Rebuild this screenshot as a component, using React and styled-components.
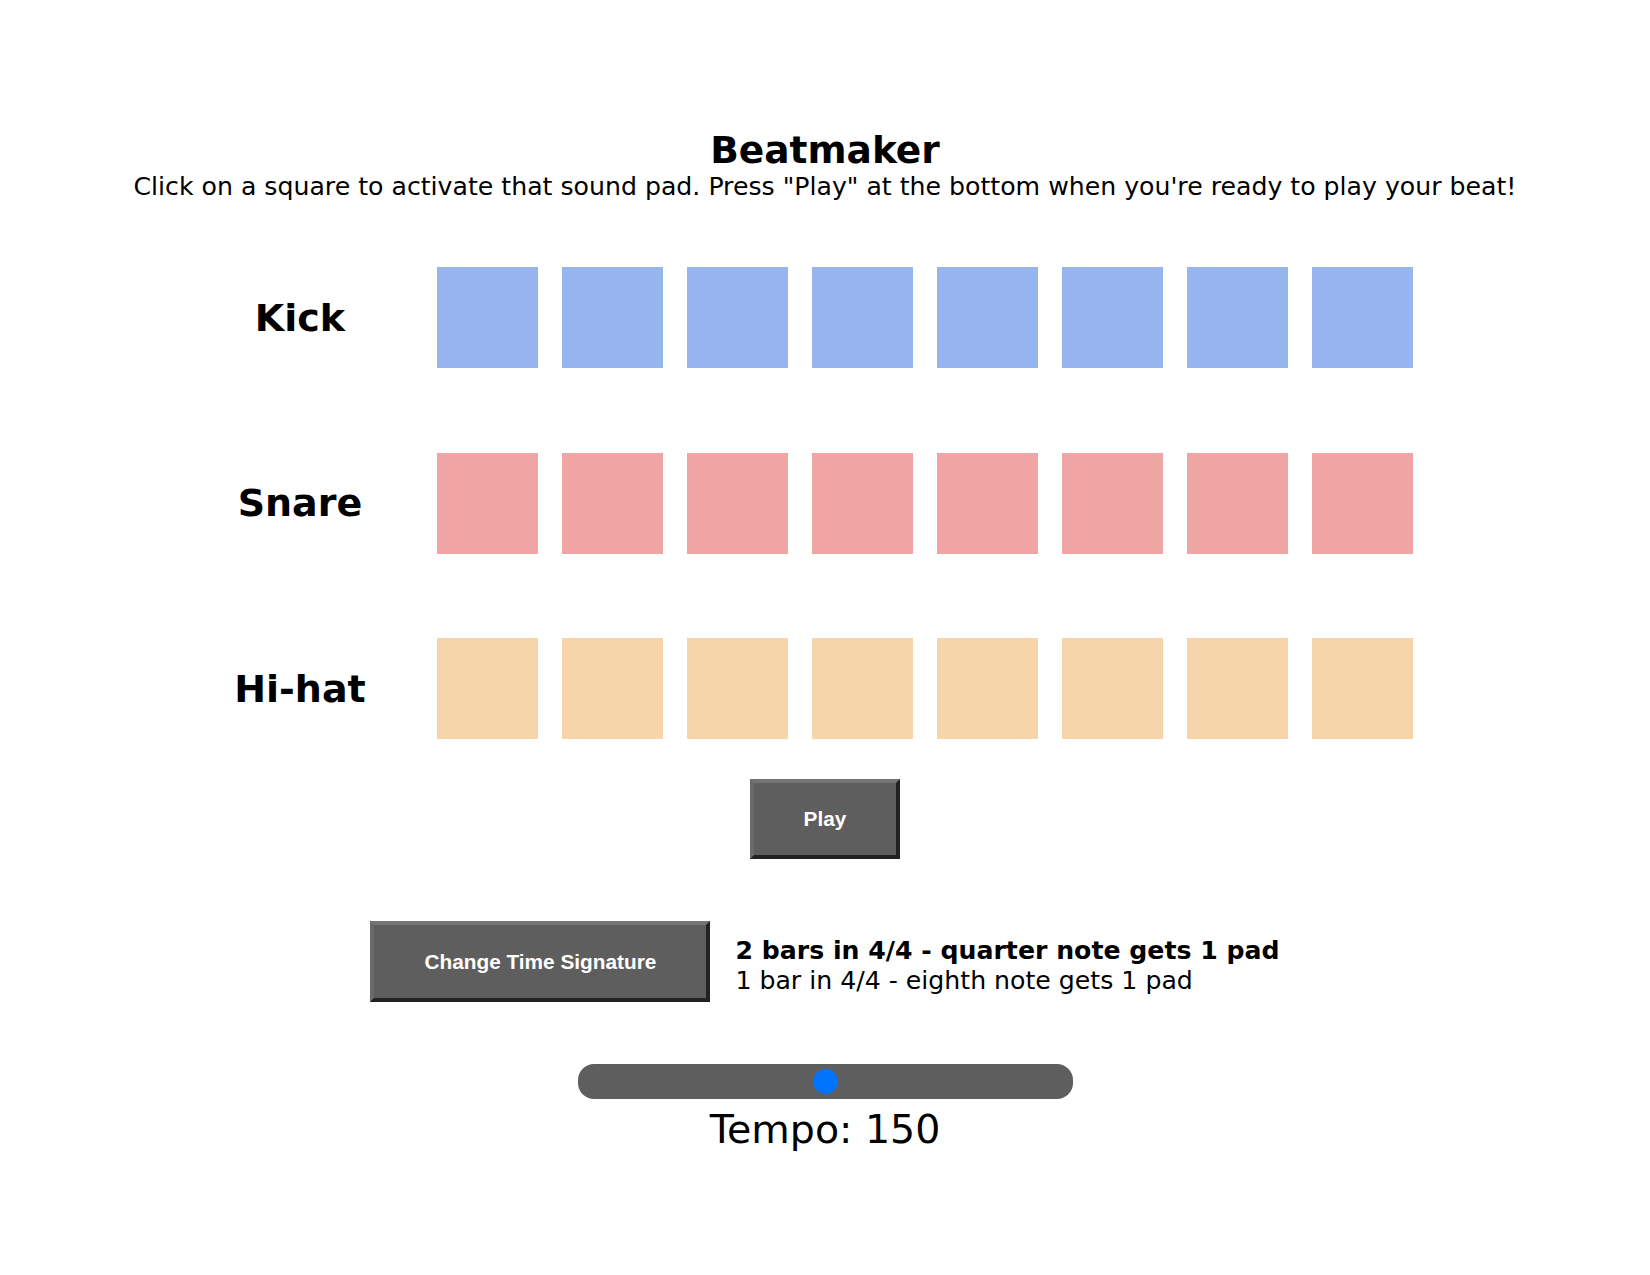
import React, { useState } from 'react';
import styled, { createGlobalStyle } from 'styled-components';

const GlobalStyle = createGlobalStyle`
  body {
    margin: 0;
    background: #ffffff;
    font-family: "DejaVu Sans", Verdana, sans-serif;
    color: #000000;
  }
`

const PAD_COLORS = {
  kick: '#96b5ef',
  snare: '#f0a5a5',
  hihat: '#f6d5aa',
};

const Page = styled.div`
  display: flex;
  flex-direction: column;
  align-items: center;
  padding-top: 128px;
`

const Title = styled.h1`
  margin: 0;
  font-size: 37.5px;
  line-height: 44px;
  font-weight: bold;
`

const Subtitle = styled.p`
  margin: 0;
  font-size: 25.2px;
  line-height: 29px;
`

const Board = styled.div`
  width: 1300px;
  margin-top: 66px;
  display: flex;
  flex-direction: column;
  gap: 84.5px;
`

const Row = styled.div`
  display: flex;
  align-items: center;
`

const Label = styled.div`
  width: 250px;
  margin-right: 12px;
  text-align: center;
  font-size: 38px;
  font-weight: bold;
`

const Pads = styled.div`
  display: flex;
  gap: 24px;
`

const Pad = styled.div`
  width: 101px;
  height: 101px;
  background-color: ${props => props.color};
  opacity: ${props => (props.active ? 0.6 : 1)};
  cursor: pointer;
`

const Button = styled.button`
  width: ${props => props.width}px;
  height: ${props => props.height}px;
  padding: 0;
  background-color: #5f5e5e;
  color: #ffffff;
  font-family: "Liberation Sans", Arial, sans-serif;
  font-size: 20.8px;
  font-weight: bold;
  border-style: solid;
  border-width: 4px;
  border-color: #747474 #222222 #222222 #6a6a6a;
  cursor: pointer;
`

const PlayButton = styled(Button)`
  margin-top: 40px;
`

const SignatureRow = styled.div`
  margin-top: 62px;
  display: flex;
  align-items: center;
  gap: 25px;
`

const SignatureList = styled.div`
  display: flex;
  flex-direction: column;
  padding-top: 8px;
  font-size: 25.2px;
  line-height: 30px;
`

const Signature = styled.div`
  font-weight: ${props => (props.selected ? 'bold' : 'normal')};
`

const Track = styled.div`
  position: relative;
  margin-top: 62px;
  width: 495px;
  height: 35px;
  border-radius: 16px;
  background-color: #5f5e5e;
`

const Thumb = styled.span`
  position: absolute;
  top: 50%;
  width: 25px;
  height: 25px;
  margin: -12.5px 0 0 -12.5px;
  border-radius: 50%;
  background-color: #0074ff;
`

const Tempo = styled.div`
  margin-top: 7px;
  font-size: 39.5px;
  line-height: 46px;
`

const ROWS = [
  { key: 'kick', name: 'Kick' },
  { key: 'snare', name: 'Snare' },
  { key: 'hihat', name: 'Hi-hat' },
];

const SIGNATURES = [
  '2 bars in 4/4 - quarter note gets 1 pad',
  '1 bar in 4/4 - eighth note gets 1 pad',
];

function App() {
  const [active, setActive] = useState({});
  const [signature, setSignature] = useState(0);
  const tempo = 150;
  const min = 60;
  const max = 240;

  const toggle = (id) => setActive(prev => ({ ...prev, [id]: !prev[id] }));

  return (
    <Page>
      <GlobalStyle />
      <Title>Beatmaker</Title>
      <Subtitle>
        Click on a square to activate that sound pad. Press "Play" at the bottom when you're ready to play your beat!
      </Subtitle>
      <Board>
        {ROWS.map(row => (
          <Row key={row.key}>
            <Label>{row.name}</Label>
            <Pads>
              {Array.from({ length: 8 }).map((_, i) => {
                const id = row.key + i;
                return (
                  <Pad
                    key={id}
                    color={PAD_COLORS[row.key]}
                    active={active[id]}
                    onClick={() => toggle(id)}
                  />
                );
              })}
            </Pads>
          </Row>
        ))}
      </Board>
      <PlayButton width={150} height={80}>Play</PlayButton>
      <SignatureRow>
        <Button width={340} height={81} onClick={() => setSignature(s => (s + 1) % 2)}>
          Change Time Signature
        </Button>
        <SignatureList>
          {SIGNATURES.map((text, i) => (
            <Signature key={text} selected={i === signature}>{text}</Signature>
          ))}
        </SignatureList>
      </SignatureRow>
      <Track>
        <Thumb style={{ left: ((tempo - min) / (max - min)) * 100 + '%' }} />
      </Track>
      <Tempo>Tempo: {tempo}</Tempo>
    </Page>
  );
}

export default App;
